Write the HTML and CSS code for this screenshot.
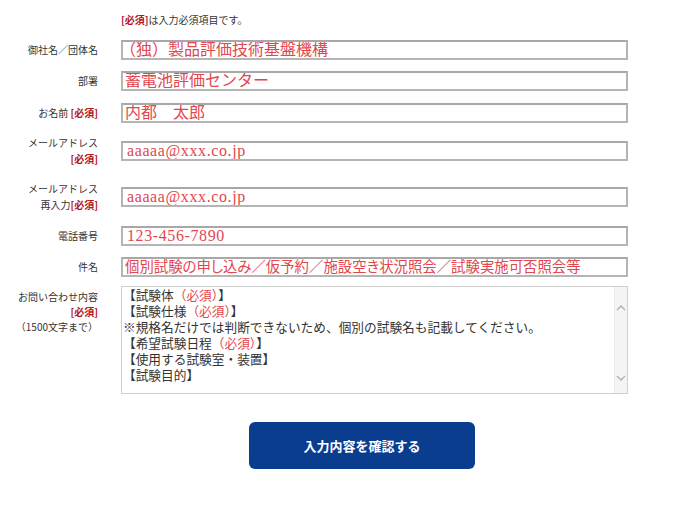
FILE: index.html
```html
<!DOCTYPE html>
<html lang="ja">
<head>
<meta charset="utf-8">
<link rel="stylesheet" href="styles.css">
</head>
<body>
<div class="form">
  <p class="note"><span class="req">[必須]</span>は入力必須項目です。</p>

  <div class="row r1">
    <div class="label">御社名／団体名</div>
    <div class="field first">（独）製品評価技術基盤機構</div>
  </div>
  <div class="row r2">
    <div class="label">部署</div>
    <div class="field">蓄電池評価センター</div>
  </div>
  <div class="row r3">
    <div class="label">お名前 <span class="req">[必須]</span></div>
    <div class="field">内都　太郎</div>
  </div>
  <div class="row r4">
    <div class="label two">メールアドレス<br><span class="req">[必須]</span></div>
    <div class="field latin">aaaaa@xxx.co.jp</div>
  </div>
  <div class="row r5">
    <div class="label two">メールアドレス<br>再入力<span class="req">[必須]</span></div>
    <div class="field latin">aaaaa@xxx.co.jp</div>
  </div>
  <div class="row r6">
    <div class="label">電話番号</div>
    <div class="field latin">123-456-7890</div>
  </div>
  <div class="row r7">
    <div class="label">件名</div>
    <div class="field prop">個別試験の申し込み／仮予約／施設空き状況照会／試験実施可否照会等</div>
  </div>
  <div class="row r8">
    <div class="label three">お問い合わせ内容<br><span class="req">[必須]</span><br>（1500文字まで）</div>
    <div class="textarea">
      <div class="ta-text">
        <div>【試験体<span class="red">（必須）</span>】</div>
        <div>【試験仕様<span class="red">（必須）</span>】</div>
        <div>※規格名だけでは判断できないため、個別の試験名も記載してください。</div>
        <div>【希望試験日程<span class="red">（必須）</span>】</div>
        <div>【使用する試験室・装置】</div>
        <div>【試験目的】</div>
      </div>
      <div class="scrollbar">
        <svg width="12" height="8" viewBox="0 0 12 8"><path d="M2 6 L6 2 L10 6" fill="none" stroke="#b0b0b0" stroke-width="1.3"/></svg>
        <svg width="12" height="8" viewBox="0 0 12 8"><path d="M2 2 L6 6 L10 2" fill="none" stroke="#b0b0b0" stroke-width="1.3"/></svg>
      </div>
    </div>
  </div>

  <div class="actions">
    <button class="submit" type="button">入力内容を確認する</button>
  </div>
</div>
</body>
</html>
```

FILE: styles.css
```css
html, body {
  margin: 0;
  padding: 0;
  background: #fff;
}
body {
  font-family: "Noto Sans CJK JP", "Noto Sans", sans-serif;
  font-size: 10px;
  color: #333;
}
.form {
  width: 628px;
  display: flex;
  flex-direction: column;
}
.note {
  margin: 13px 0 0 121px;
  line-height: 14px;
  font-size: 10px;
}
.req {
  color: #b3141c;
  font-weight: bold;
}
.row {
  display: grid;
  grid-template-columns: 98px 507px;
  column-gap: 23px;
  align-items: center;
}
.r1 { margin-top: 13px; }
.r2 { margin-top: 11px; }
.r3 { margin-top: 12px; }
.r4 { margin-top: 12px; }
.r5 { margin-top: 14px; }
.r6 { margin-top: 13px; }
.r7 { margin-top: 11px; }
.r8 { margin-top: 9px; align-items: start; }

.label {
  text-align: right;
  line-height: 16px;
  white-space: nowrap;
}
.label.three {
  line-height: 15px;
  padding-top: 3px;
}
.field {
  box-sizing: border-box;
  height: 20px;
  border: 2px solid #b5b5b5;
  border-top-color: #a8a8a8;
  padding: 0 2px 0 2px;
  font-family: "Liberation Serif", "Noto Sans CJK JP", serif;
  font-size: 16px;
  line-height: 16px;
  color: #e2474e;
  white-space: nowrap;
  overflow: hidden;
}
.field.first {
  text-indent: -5px;
}
.field.latin {
  padding-left: 4px;
  letter-spacing: 0.6px;
}
.field.prop {
  font-feature-settings: "palt";
  font-size: 14.4px;
}
.textarea {
  box-sizing: border-box;
  height: 108px;
  border: 1px solid #cfcfcf;
  display: flex;
  background: #fff;
}
.ta-text {
  flex: 1;
  padding: 1px 0 0 1px;
  font-family: "Liberation Serif", "Noto Sans CJK JP", serif;
  font-size: 12.7px;
  line-height: 16px;
  color: #333;
}
.red {
  color: #e2474e;
}
.scrollbar {
  width: 12px;
  background: #f4f4f4;
  border-left: 1px solid #ececec;
  display: flex;
  flex-direction: column;
  justify-content: space-between;
  align-items: center;
  padding: 17px 0 11px;
}
.scrollbar svg {
  display: block;
}
.actions {
  margin-top: 28px;
  padding-left: 249px;
  display: flex;
}
.submit {
  width: 226px;
  height: 47px;
  border: none;
  border-radius: 6px;
  background: #0b3d8f;
  color: #fff;
  font-family: "Noto Sans CJK JP", sans-serif;
  font-size: 13px;
  font-weight: bold;
  padding: 0;
  cursor: pointer;
}
```
